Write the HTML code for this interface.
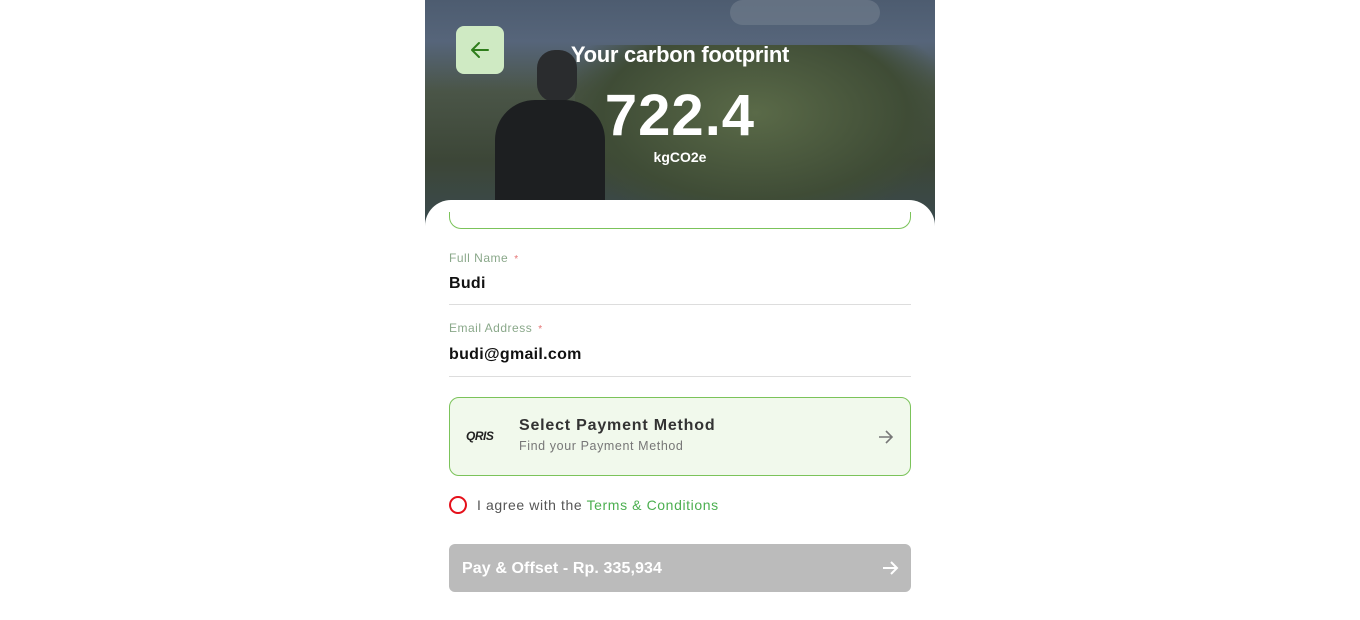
<!DOCTYPE html>
<html><head><style>
*{margin:0;padding:0;box-sizing:border-box}
body{width:1360px;height:606px;background:#fff;font-family:"Liberation Sans",sans-serif;position:relative;overflow:hidden}
.hero{position:absolute;left:425px;top:0;width:510px;height:230px;overflow:hidden;
background:linear-gradient(180deg,#4d5c70 0%,#56657a 18%,#4a5547 40%,#3c4637 70%,#3a4a50 100%)}
.hero .trees{position:absolute;left:150px;top:45px;width:360px;height:170px;background:radial-gradient(ellipse at 50% 40%,#5a6a48 0%,#3f4c36 60%,transparent 80%)}
.hero .man{position:absolute;left:70px;top:100px;width:110px;height:130px;background:#1d1f21;border-radius:40px 40px 0 0}
.hero .head{position:absolute;left:112px;top:50px;width:40px;height:52px;background:#2a2c2e;border-radius:18px}
.hero .cloud{position:absolute;left:305px;top:0;width:150px;height:25px;background:#6d7a8a;border-radius:20px;opacity:.7}
.back{position:absolute;left:456px;top:26px;width:48px;height:48px;background:#cfeac3;border-radius:8px}
.title{position:absolute;left:425px;width:510px;text-align:center;color:#fff;font-weight:bold}
.card{position:absolute;left:425px;top:200px;width:510px;height:420px;background:#fff;border-radius:26px 26px 0 0}
.gline{position:absolute;left:449px;top:212px;width:462px;height:17px;border:1px solid #7bc35a;border-top:none;border-radius:0 0 12px 12px}
.lbl{position:absolute;left:449px;font-size:12px;color:#8aa88a;letter-spacing:.5px}
.lbl span{color:#e57373;margin-left:6px;font-size:10px}
.val{position:absolute;left:449px;font-size:16px;font-weight:bold;color:#111;letter-spacing:.3px}
.hr{position:absolute;left:449px;width:462px;height:1px;background:#ddd}
.pay{position:absolute;left:449px;top:397px;width:462px;height:79px;background:#f1f9ec;border:1px solid #7bc35a;border-radius:10px}
.btn{position:absolute;left:449px;top:544px;width:462px;height:48px;background:#bbb;border-radius:6px;color:#fff;font-weight:bold;font-size:16px}
</style></head><body>
<div class="hero"><div class="cloud"></div><div class="trees"></div><div class="head"></div><div class="man"></div></div>
<div class="back"><svg width="48" height="48" viewBox="0 0 48 48"><path d="M32 24H16M23 17l-7 7 7 7" stroke="#2e7d1a" stroke-width="2" fill="none" stroke-linecap="round" stroke-linejoin="round"/></svg></div>
<div class="title" style="top:42px;font-size:22px;letter-spacing:-.3px">Your carbon footprint</div>
<div class="title" style="top:82px;font-size:58px;letter-spacing:1px">722.4</div>
<div class="title" style="top:149px;font-size:14px">kgCO2e</div>
<div class="card"></div>
<div class="gline"></div>
<div class="lbl" style="top:251px">Full Name<span>*</span></div>
<div class="val" style="top:275px">Budi</div>
<div class="hr" style="top:304px"></div>
<div class="lbl" style="top:321px">Email Address<span>*</span></div>
<div class="val" style="top:346px">budi@gmail.com</div>
<div class="hr" style="top:376px"></div>
<div class="pay">
<div style="position:absolute;left:16px;top:31px;font-size:12px;font-weight:bold;color:#222;letter-spacing:-0.5px;font-style:italic">QRIS</div>
<div style="position:absolute;left:69px;top:19px;font-size:16px;color:#333;font-weight:bold;letter-spacing:.8px">Select Payment Method</div>
<div style="position:absolute;left:69px;top:41px;font-size:12.5px;color:#777;letter-spacing:.6px">Find your Payment Method</div>
<svg style="position:absolute;left:427px;top:30px" width="18" height="18" viewBox="0 0 18 18"><path d="M2 9h13M9 3l6 6-6 6" stroke="#777" stroke-width="1.6" fill="none"/></svg>
</div>
<div style="position:absolute;left:449px;top:496px;width:18px;height:18px;border:2px solid #e5101a;border-radius:50%"></div>
<div style="position:absolute;left:477px;top:497px;font-size:14px;color:#555;letter-spacing:.6px">I agree with the <span style="color:#4caf50">Terms &amp; Conditions</span></div>
<div class="btn"><div style="position:absolute;left:13px;top:16px;letter-spacing:.1px">Pay &amp; Offset - Rp. 335,934</div>
<svg style="position:absolute;left:432px;top:15px" width="18" height="18" viewBox="0 0 18 18"><path d="M2 9h14M10 3l6 6-6 6" stroke="#fff" stroke-width="2" fill="none"/></svg></div>
</body></html>
